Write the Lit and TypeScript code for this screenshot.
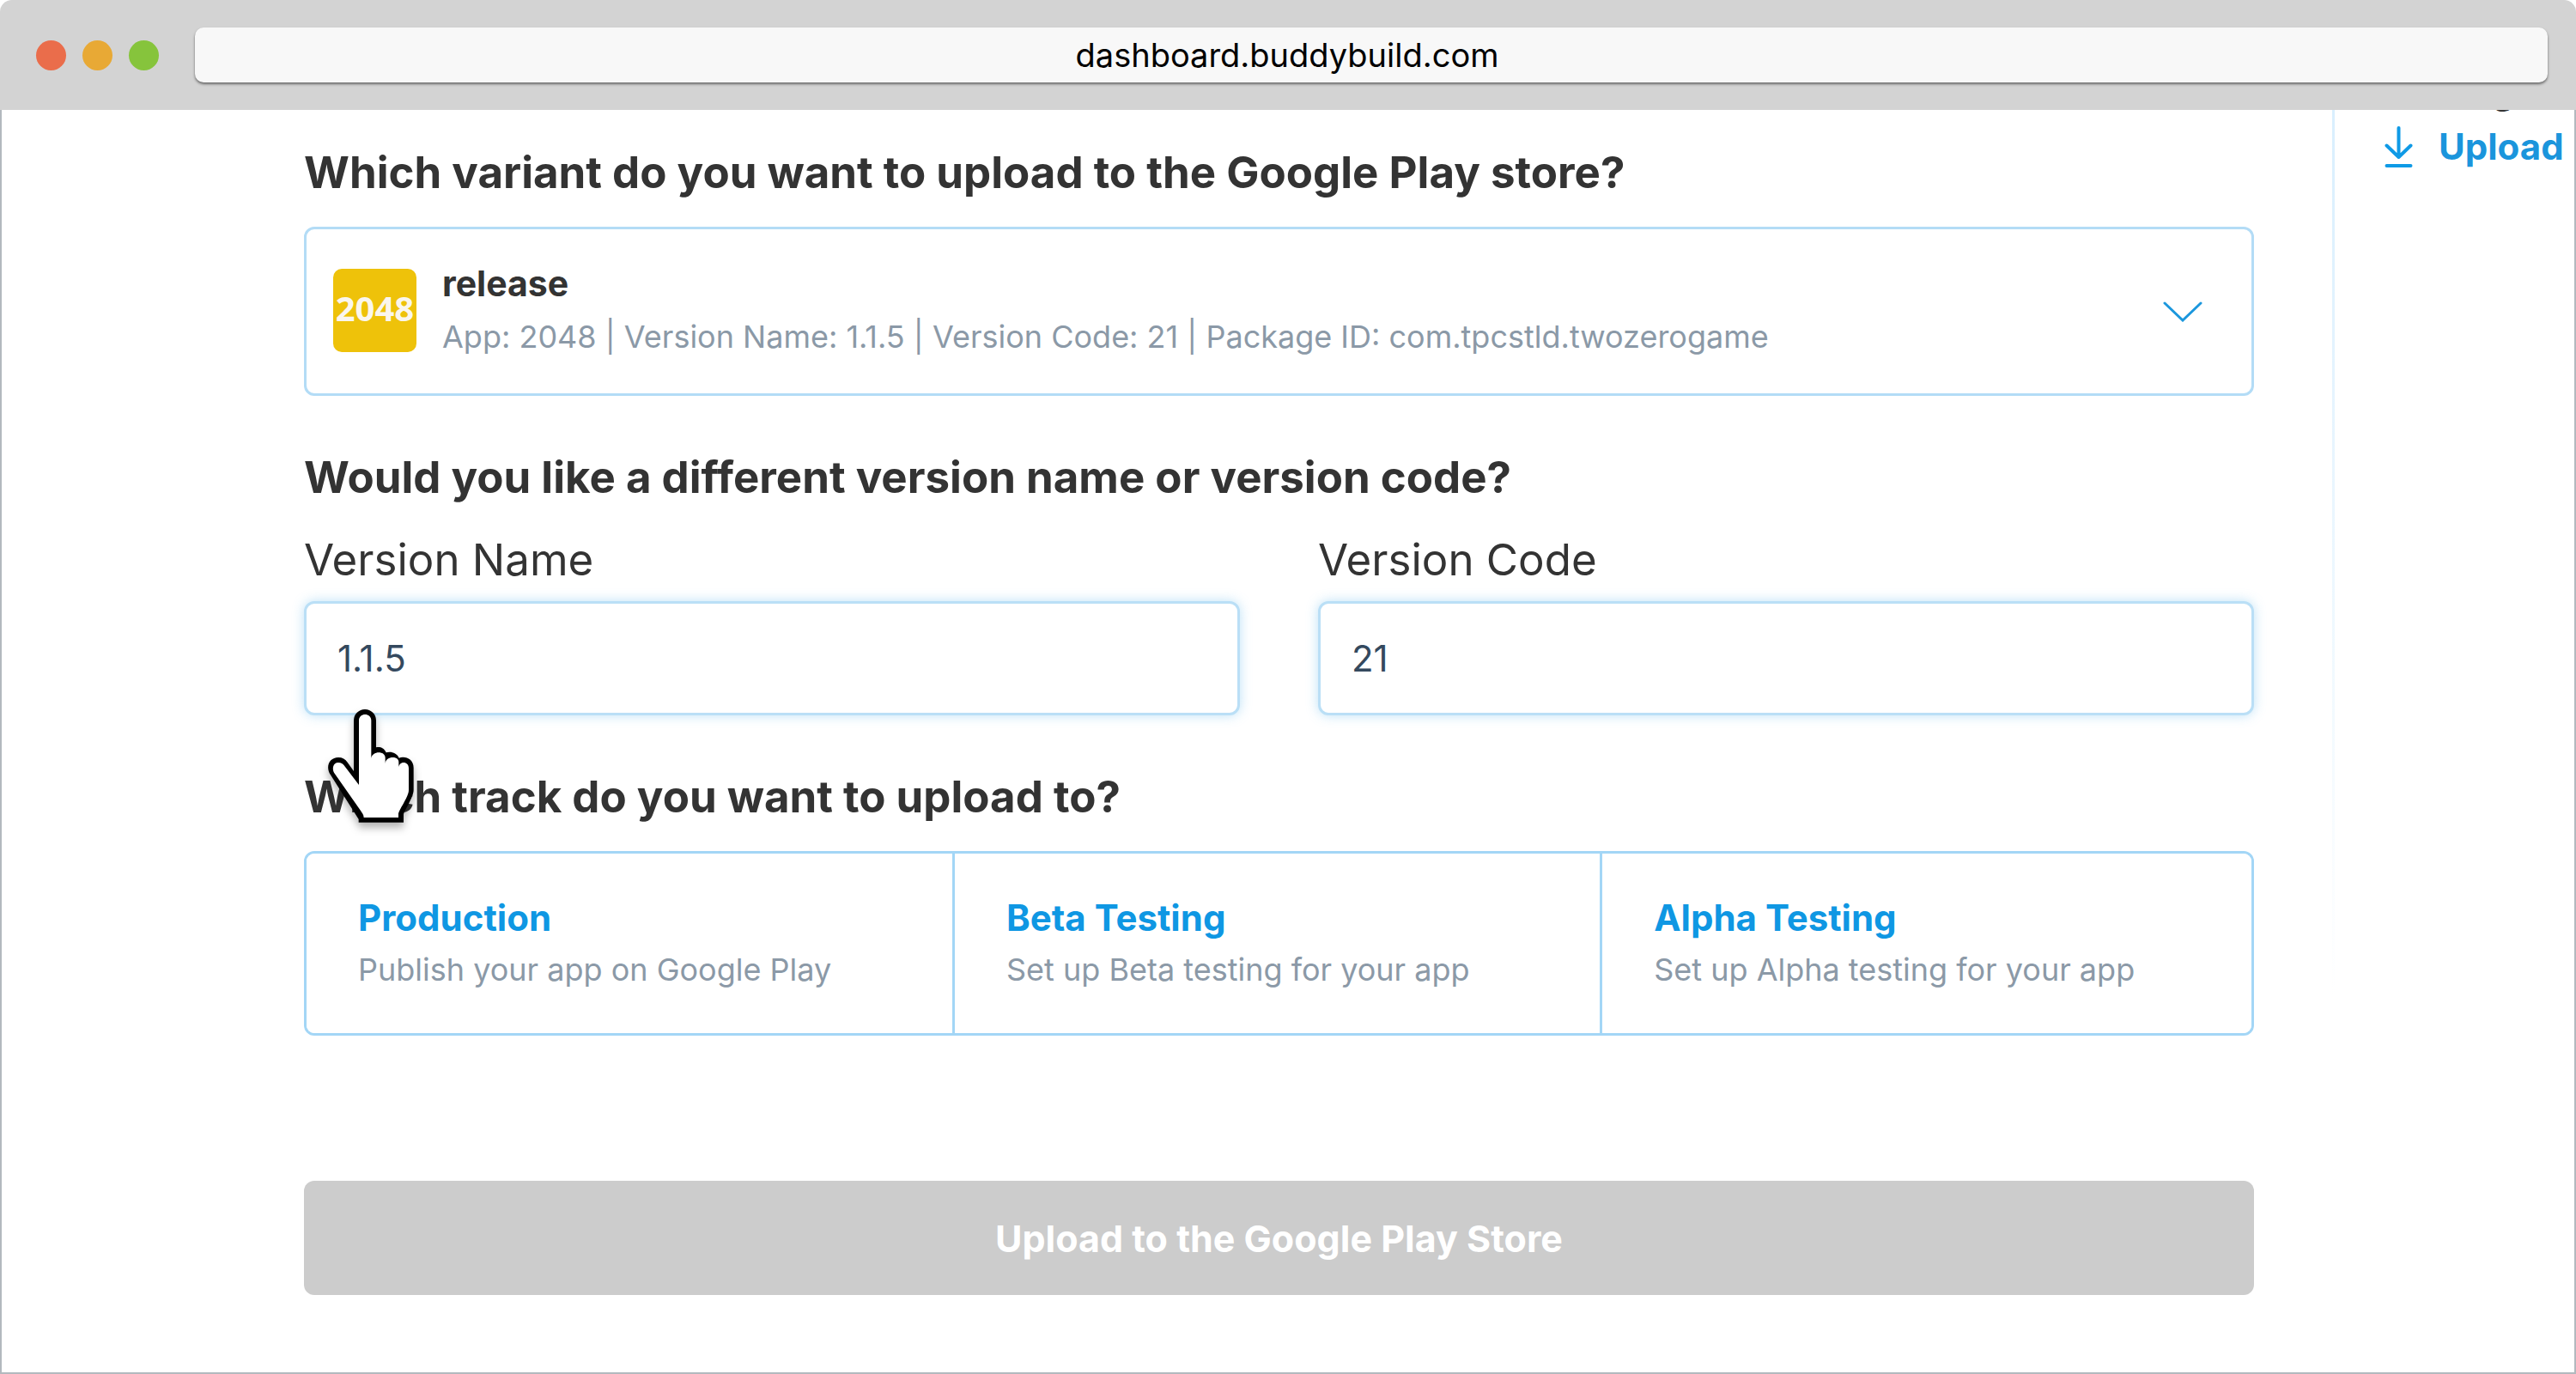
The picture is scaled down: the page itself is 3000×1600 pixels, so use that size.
import { LitElement, html, css, svg } from "lit";
import { customElement, state } from "lit/decorators.js";

interface Track {
  name: string;
  detail: string;
}

const TRACKS: Track[] = [
  { name: "Production", detail: "Publish your app on Google Play" },
  { name: "Beta Testing", detail: "Set up Beta testing for your app" },
  { name: "Alpha Testing", detail: "Set up Alpha testing for your app" },
];

const downloadIcon = svg`
  <svg class="download" viewBox="0 0 34 50" aria-hidden="true">
    <path d="M16.5 3V37M2.5 23.5L16.5 37L30.5 23.5M2.5 47H30.5" />
  </svg>`;

const chevronIcon = svg`
  <svg class="chevron" viewBox="0 0 48 28" aria-hidden="true">
    <path d="M3 6L24 26L45 6" />
  </svg>`;

const handPointer = svg`
  <svg class="pointer" viewBox="36 78 300 396" aria-hidden="true">
    <path fill="#000" d="M143 473V462L41 301C28 272 44 246 72 246C86 246 97 252 104 263L126 294V117A39 39 0 0 1 204 117V211C218 208 232 213 239 229C256 224 276 230 284 248C306 240 335 252 335 282V360C335 385 300 436 300 446V473Z" />
    <path fill="#fff" d="M161 456C161 446 155 440 150 432L57 299C50 286 53 264 72 264C82 264 88 268 92 274L144 342V117C144 89 187 89 187 117V249C190 222 236 222 236 247V268C237 240 283 240 283 262V280C286 258 318 258 318 284V360C318 385 282 430 282 445V456Z" />
  </svg>`;

@customElement("app-root")
export class AppRoot extends LitElement {
  @state() private versionName = "1.1.5";
  @state() private versionCode = "21";

  static styles = css`
    :host {
      display: flex;
      flex-direction: column;
      min-height: 100vh;
      background: #fff;
      color: #333;
      font-family: Inter, "Liberation Sans", sans-serif;
    }
    * {
      box-sizing: border-box;
    }
    button,
    input {
      font: inherit;
      color: inherit;
      margin: 0;
    }
    .chrome {
      display: flex;
      align-items: center;
      height: 128px;
      padding: 0 33px 0 42px;
      background: #d3d3d3;
      border-radius: 14px 14px 0 0;
    }
    .lights {
      display: flex;
      gap: 19px;
      margin-right: 42px;
    }
    .light {
      width: 35px;
      height: 35px;
      border-radius: 50%;
    }
    .close { background: #ea6d4b; }
    .minimise { background: #e8a935; }
    .expand { background: #86c43c; }
    .address {
      flex: 1;
      min-width: 0;
      height: 64px;
      padding: 0 196px 0 0;
      border: 0;
      border-radius: 10px;
      background: #f8f8f8;
      box-shadow: 0 2px 3px rgba(0, 0, 0, 0.5);
      color: #000;
      font-size: 38px;
      text-align: center;
    }
    .page {
      flex: 1;
      display: flex;
      border: solid #b3b9be;
      border-width: 0 2px 2px;
    }
    .form {
      flex: 1;
      min-width: 0;
      padding: 40px 91px 88px 352px;
      display: flex;
      flex-direction: column;
      gap: 62px;
    }
    .heading {
      margin: 0 0 31px;
      font-size: 51px;
      line-height: 65px;
      font-weight: 700;
    }
    .variant {
      display: flex;
      align-items: center;
      width: 100%;
      padding: 32px 56px 35px 31px;
      border: 3px solid #b3dcf6;
      border-radius: 12px;
      background: #fff;
      text-align: left;
    }
    .app-icon {
      display: grid;
      place-items: center;
      width: 97px;
      height: 97px;
      margin-right: 30px;
      padding-bottom: 6px;
      border-radius: 10px;
      background: #eec20a;
      color: #faf6ee;
      font: 700 40px "Noto Sans", sans-serif;
    }
    .variant-text {
      flex: 1;
      min-width: 0;
    }
    .variant-name {
      display: block;
      font-size: 41px;
      line-height: 63px;
      font-weight: 700;
    }
    .variant-info {
      display: block;
      font-size: 36px;
      line-height: 61px;
      color: #8b99a7;
    }
    .chevron {
      width: 48px;
      height: 28px;
      fill: none;
      stroke: #1b97dd;
      stroke-width: 3;
      stroke-linecap: round;
    }
    .fields {
      display: grid;
      grid-template-columns: 1fr 1fr;
      gap: 91px;
    }
    .field {
      position: relative;
    }
    .label {
      display: block;
      margin-bottom: 16px;
      font-size: 51px;
      line-height: 65px;
    }
    .text-input {
      display: block;
      width: 100%;
      height: 133px;
      padding: 0 36px;
      border: 3px solid #badff6;
      border-radius: 12px;
      outline: none;
      background: #fff;
      box-shadow: 0 0 14px rgba(90, 180, 235, 0.4);
      color: #34495e;
      font-size: 42px;
    }
    .pointer {
      position: absolute;
      left: 28px;
      bottom: -125px;
      width: 100px;
      height: 132px;
      filter: drop-shadow(0 6px 5px rgba(0, 0, 0, 0.3));
      pointer-events: none;
    }
    .tracks {
      display: grid;
      grid-template-columns: 33.2% 33.3% 1fr;
      border: 3px solid #a3d6f6;
      border-radius: 12px;
      overflow: hidden;
    }
    .track {
      padding: 45px 60px 44px;
      border: 0;
      background: #fff;
      text-align: left;
    }
    .track + .track {
      border-left: 3px solid #a3d6f6;
    }
    .track-name {
      display: block;
      font-size: 42px;
      line-height: 60px;
      font-weight: 700;
      color: #0f97e3;
    }
    .track-detail {
      display: block;
      font-size: 36px;
      line-height: 60px;
      color: #8b99a7;
    }
    .submit {
      height: 133px;
      margin-top: 107px;
      border: 0;
      border-radius: 12px;
      background: #ccc;
      color: #fff;
      font-size: 43px;
      font-weight: 700;
    }
    .side {
      display: flex;
      width: 282px;
      overflow: hidden;
    }
    .rule {
      width: 3px;
      height: 1032px;
      background: linear-gradient(#d9effe, rgba(217, 239, 254, 0));
    }
    .links {
      margin-top: -54px;
      padding-left: 58px;
      font-size: 42px;
      font-weight: 700;
    }
    .above {
      padding-left: 125px;
      line-height: 63px;
    }
    .link {
      display: flex;
      align-items: center;
      gap: 29px;
      line-height: 68px;
      color: #1b95dc;
      text-decoration: none;
    }
    .download {
      width: 34px;
      height: 50px;
      fill: none;
      stroke: #0f9ae6;
      stroke-width: 4;
      stroke-linecap: round;
      stroke-linejoin: round;
    }
  `;

  render() {
    return html`
      <header class="chrome">
        <div class="lights">
          <span class="light close"></span>
          <span class="light minimise"></span>
          <span class="light expand"></span>
        </div>
        <input class="address" type="text" aria-label="Address" readonly value="dashboard.buddybuild.com" />
      </header>
      <div class="page">
        <main class="form">
          <section>
            <h2 class="heading">Which variant do you want to upload to the Google Play store?</h2>
            <button class="variant" type="button" aria-haspopup="listbox">
              <span class="app-icon">2048</span>
              <span class="variant-text">
                <span class="variant-name">release</span>
                <span class="variant-info">App: 2048 | Version Name: 1.1.5 | Version Code: 21 | Package ID: com.tpcstld.twozerogame</span>
              </span>
              ${chevronIcon}
            </button>
          </section>
          <section>
            <h2 class="heading">Would you like a different version name or version code?</h2>
            <div class="fields">
              <div class="field">
                <label class="label" for="version-name">Version Name</label>
                <input
                  class="text-input"
                  id="version-name"
                  type="text"
                  .value=${this.versionName}
                  @input=${(e: InputEvent) => (this.versionName = (e.target as HTMLInputElement).value)}
                />
                ${handPointer}
              </div>
              <div class="field">
                <label class="label" for="version-code">Version Code</label>
                <input
                  class="text-input"
                  id="version-code"
                  type="text"
                  .value=${this.versionCode}
                  @input=${(e: InputEvent) => (this.versionCode = (e.target as HTMLInputElement).value)}
                />
              </div>
            </div>
          </section>
          <section>
            <h2 class="heading">Which track do you want to upload to?</h2>
            <div class="tracks">
              ${TRACKS.map(
                (track) => html`
                  <button class="track" type="button">
                    <span class="track-name">${track.name}</span>
                    <span class="track-detail">${track.detail}</span>
                  </button>
                `
              )}
            </div>
          </section>
          <button class="submit" type="button" disabled>Upload to the Google Play Store</button>
        </main>
        <aside class="side">
          <div class="rule"></div>
          <nav class="links">
            <div class="above">g</div>
            <a class="link" href="#upload">${downloadIcon}<span>Upload</span></a>
          </nav>
        </aside>
      </div>
    `;
  }
}
